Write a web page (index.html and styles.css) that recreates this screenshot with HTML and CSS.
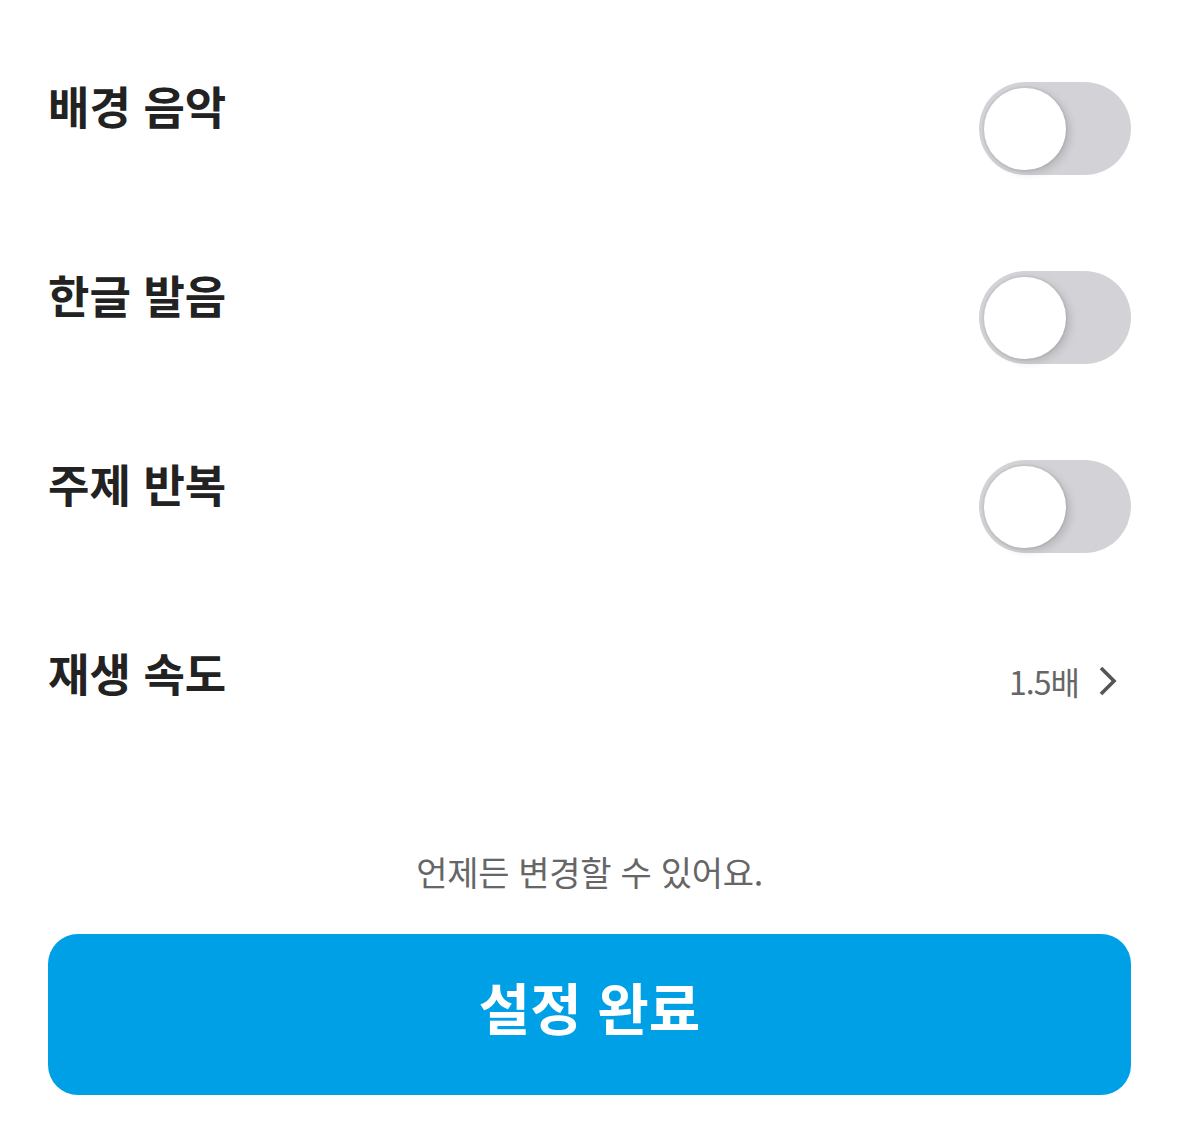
FILE: index.html
```html
<!DOCTYPE html>
<html lang="ko">

<head>
    <meta charset="UTF-8">
    <meta name="viewport" content="width=device-width, initial-scale=1.0">
    <title>설정</title>
    <link rel="stylesheet" href="styles.css">
</head>

<body>
    <main class="settings-page">
        <ul class="setting-list">
            <li class="setting-row">
                <span class="setting-label">배경 음악</span>
                <span class="toggle"><span class="toggle-knob"></span></span>
            </li>
            <li class="setting-row">
                <span class="setting-label">한글 발음</span>
                <span class="toggle"><span class="toggle-knob"></span></span>
            </li>
            <li class="setting-row">
                <span class="setting-label">주제 반복</span>
                <span class="toggle"><span class="toggle-knob"></span></span>
            </li>
            <li class="setting-row">
                <span class="setting-label">재생 속도</span>
                <span class="setting-value">
                    1.5배
                    <svg class="chevron" width="22" height="32" viewBox="0 0 22 32">
                        <polyline points="4,3 17,16 4,29" fill="none" stroke="#555" stroke-width="3.6" />
                    </svg>
                </span>
            </li>
        </ul>

        <p class="setting-hint">언제든 변경할 수 있어요.</p>
        <button class="btn-done" type="button">설정 완료</button>
    </main>
</body>

</html>
```

FILE: styles.css
```css
/* 전체 */
body {
    margin: 0;
    background: #fff;
    font-family: "Noto Sans CJK KR", "Noto Sans", sans-serif;
    color: #222;
}

.settings-page {
    padding: 82px 48px 0;
}

/* 설정 목록 */
.setting-list {
    list-style: none;
    margin: 0;
    padding: 0;
    display: flex;
    flex-direction: column;
    gap: 96px;
}

.setting-row {
    display: flex;
    justify-content: space-between;
    align-items: flex-start;
    height: 93px;
}

.setting-label {
    font-size: 45px;
    font-weight: 700;
    line-height: 1;
    margin-top: 1px;
    color: #222;
}

/* 토글 */
.toggle {
    width: 152px;
    height: 93px;
    border-radius: 47px;
    background: #d3d3d7;
    display: flex;
    align-items: center;
    padding-left: 5px;
    box-sizing: border-box;
}

.toggle-knob {
    width: 82px;
    height: 82px;
    border-radius: 50%;
    background: #fff;
    box-shadow: 0 0 0 2px rgba(0, 0, 0, 0.04), 4px 3px 8px rgba(0, 0, 0, 0.14);
}

/* 재생 속도 값 */
.setting-value {
    display: flex;
    align-items: center;
    gap: 18px;
    margin-top: 16px;
    margin-right: 12px;
    font-size: 32px;
    line-height: 1;
    letter-spacing: -1px;
    color: #666;
}

.chevron {
    display: block;
}

/* 하단 */
.setting-hint {
    margin: 113px 0 0;
    text-align: center;
    font-size: 34px;
    line-height: 1;
    letter-spacing: -0.3px;
    color: #666;
}

.btn-done {
    display: block;
    width: 100%;
    height: 161px;
    margin-top: 45px;
    padding: 0 0 18px;
    border: 0;
    border-radius: 30px;
    background: #00a0e6;
    color: #fff;
    font-family: inherit;
    font-size: 56px;
    font-weight: 700;
    letter-spacing: 0;
}
```
